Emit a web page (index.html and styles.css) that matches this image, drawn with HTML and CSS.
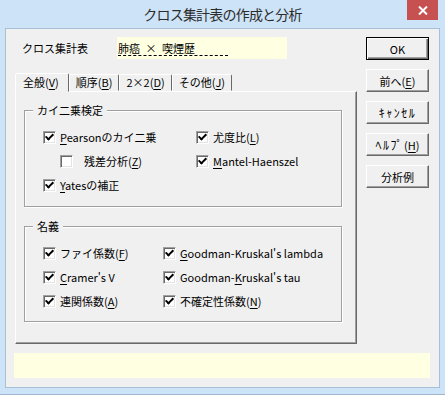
FILE: index.html
```html
<!DOCTYPE html>
<html lang="ja">
<head>
    <meta charset="UTF-8">
    <meta name="viewport" content="width=device-width, initial-scale=1.0">
    <title>クロス集計表の作成と分析</title>
    <link rel="stylesheet" href="styles.css">
</head>
<body>
    <div class="window">
        <div class="titlebar">
            <span></span>
            <div class="title">クロス集計表の作成と分析</div>
            <button class="close" aria-label="閉じる">
                <svg width="10" height="9" viewBox="0 0 10 9"><path d="M1 0.5 L9 8.5 M9 0.5 L1 8.5" stroke="#fff" stroke-width="2"/></svg>
            </button>
        </div>

        <div class="client">
            <div class="main">
                <div class="left">
                    <div class="name-row">
                        <span class="name-label">クロス集計表</span>
                        <span class="name-field"><span class="name-text">肺癌&ensp;×&ensp;喫煙歴&ensp;&ensp;&ensp;&ensp;&ensp;&ensp;</span></span>
                    </div>

                    <div class="tabs">
                        <div class="tab active">全般(<u>V</u>)</div>
                        <div class="tab">順序(<u>B</u>)</div>
                        <div class="tab">2×2(<u>D</u>)</div>
                        <div class="tab">その他(<u>J</u>)</div>
                    </div>

                    <div class="panel">
                        <fieldset class="group chi">
                            <legend>カイ二乗検定</legend>
                            <div class="opts">
                                <label class="opt"><span class="box on"></span><span><u>P</u>earsonのカイ二乗</span></label>
                                <label class="opt"><span class="box on"></span><span>尤度比(<u>L</u>)</span></label>
                                <label class="opt sub"><span class="box"></span><span>残差分析(<u>Z</u>)</span></label>
                                <label class="opt"><span class="box on"></span><span><u>M</u>antel-Haenszel</span></label>
                                <label class="opt"><span class="box on"></span><span><u>Y</u>atesの補正</span></label>
                            </div>
                        </fieldset>

                        <fieldset class="group nominal">
                            <legend>名義</legend>
                            <div class="opts">
                                <label class="opt"><span class="box on"></span><span>ファイ係数(<u>F</u>)</span></label>
                                <label class="opt"><span class="box on"></span><span><u>G</u>oodman-Kruskal's lambda</span></label>
                                <label class="opt"><span class="box on"></span><span><u>C</u>ramer's V</span></label>
                                <label class="opt"><span class="box on"></span><span>Goodman-<u>K</u>ruskal's tau</span></label>
                                <label class="opt"><span class="box on"></span><span>連関係数(<u>A</u>)</span></label>
                                <label class="opt"><span class="box on"></span><span>不確定性係数(<u>N</u>)</span></label>
                            </div>
                        </fieldset>
                    </div>
                </div>

                <div class="buttons">
                    <button class="btn default">OK</button>
                    <button class="btn">前へ(<u>E</u>)</button>
                    <button class="btn"><span class="hw">ｷｬﾝｾﾙ</span></button>
                    <button class="btn"><span class="hw">ﾍﾙﾌﾟ</span>(<u>H</u>)</button>
                    <button class="btn">分析例</button>
                </div>
            </div>

            <div class="status"></div>
        </div>
    </div>
</body>
</html>
```

FILE: styles.css
```css
* {
    box-sizing: border-box;
}
body {
    margin: 0;
    font-family: "Noto Sans CJK JP", "Noto Sans", sans-serif;
    font-size: 11px;
    line-height: 16px;
    color: #000;
}
u {
    text-underline-offset: 2px;
}
.window {
    width: 445px;
    height: 395px;
    background: #cde3f7;
    border-bottom: 1px solid #9fb5cc;
}
.titlebar {
    height: 28px;
    display: grid;
    grid-template-columns: 38px 1fr 38px;
    align-items: center;
}
.title {
    text-align: center;
    font-size: 14px;
    letter-spacing: -0.8px;
    color: #2b2b2b;
}
.close {
    align-self: start;
    width: 31px;
    height: 20px;
    padding: 0;
    border: 0;
    background: #c75050;
    display: grid;
    place-items: center;
}
.client {
    margin: 0 5px;
    height: 360px;
    background: #f0f0f0;
    border: 1px solid #a9bfd6;
    padding: 8px 9px 9px 8px;
}
.main {
    display: flex;
    gap: 9px;
    margin-left: 1px;
}
.left {
    width: 342px;
}
.name-row {
    height: 22px;
    display: flex;
    align-items: center;
}
.name-label {
    width: 102px;
    padding-left: 7px;
}
.name-field {
    width: 170px;
    height: 22px;
    background: #ffffe1;
    display: flex;
    align-items: center;
    padding-left: 1px;
}
.name-text {
    text-decoration: underline dashed;
    text-underline-offset: 2px;
}
.tabs {
    display: flex;
    align-items: flex-end;
    height: 18px;
    margin-top: 14px;
}
.tab {
    height: 17px;
    padding: 0 6px;
    line-height: 15px;
    border: 1px solid;
    border-color: #fff #696969 transparent #fff;
    border-radius: 2px 2px 0 0;
}
.tab.active {
    height: 19px;
    margin-bottom: -1px;
    padding: 0 9px 0 7px;
    line-height: 16px;
    background: #f0f0f0;
    position: relative;
    z-index: 1;
}
.panel {
    border: 1px solid;
    border-color: #fff #696969 #696969 #fff;
    box-shadow: inset -1px -1px #a0a0a0;
    padding: 10px 14px 21px 8px;
}
.group {
    margin: 0;
    padding: 7px 0 9px 18px;
    border: 1px solid #a0a0a0;
    box-shadow: inset 1px 1px #fff, 1px 1px #fff;
}
.group.nominal {
    margin-top: 11px;
    padding-bottom: 8px;
}
.group legend {
    margin-left: -10px;
    padding: 0 4px;
    background: #f0f0f0;
}
.opts {
    display: grid;
    grid-auto-rows: 24px;
}
.chi .opts {
    grid-template-columns: 153px 1fr;
}
.nominal .opts {
    grid-template-columns: 120px 1fr;
}
.opt {
    display: flex;
    align-items: center;
    gap: 4px;
    white-space: nowrap;
}
.opt.sub {
    padding-left: 17px;
    gap: 11px;
}
.box {
    width: 13px;
    height: 13px;
    flex: none;
    background: #fff;
    border: 1px solid;
    border-color: #a0a0a0 #fff #fff #a0a0a0;
    box-shadow: inset 1px 1px #696969, inset -1px -1px #e3e3e3;
    display: grid;
    place-items: center;
}
.box.on::after {
    content: "";
    width: 3px;
    height: 6px;
    margin-top: -2px;
    border: solid #000;
    border-width: 0 2px 2px 0;
    transform: rotate(45deg);
}
.buttons {
    display: flex;
    flex-direction: column;
    gap: 9px;
}
.btn {
    width: 63px;
    height: 23px;
    padding: 0;
    font: inherit;
    color: #000;
    background: #f0f0f0;
    border: 1px solid;
    border-color: #fff #696969 #696969 #fff;
    box-shadow: inset -1px -1px #a0a0a0;
}
.btn.default {
    border-color: #000;
    box-shadow: inset 1px 1px #fff, inset -1px -1px #696969, inset -2px -2px #a0a0a0;
}
.hw {
    font-size: 12px;
    letter-spacing: 1.5px;
}
.status {
    height: 25px;
    margin-top: 9px;
    background: #ffffe1;
}
```
